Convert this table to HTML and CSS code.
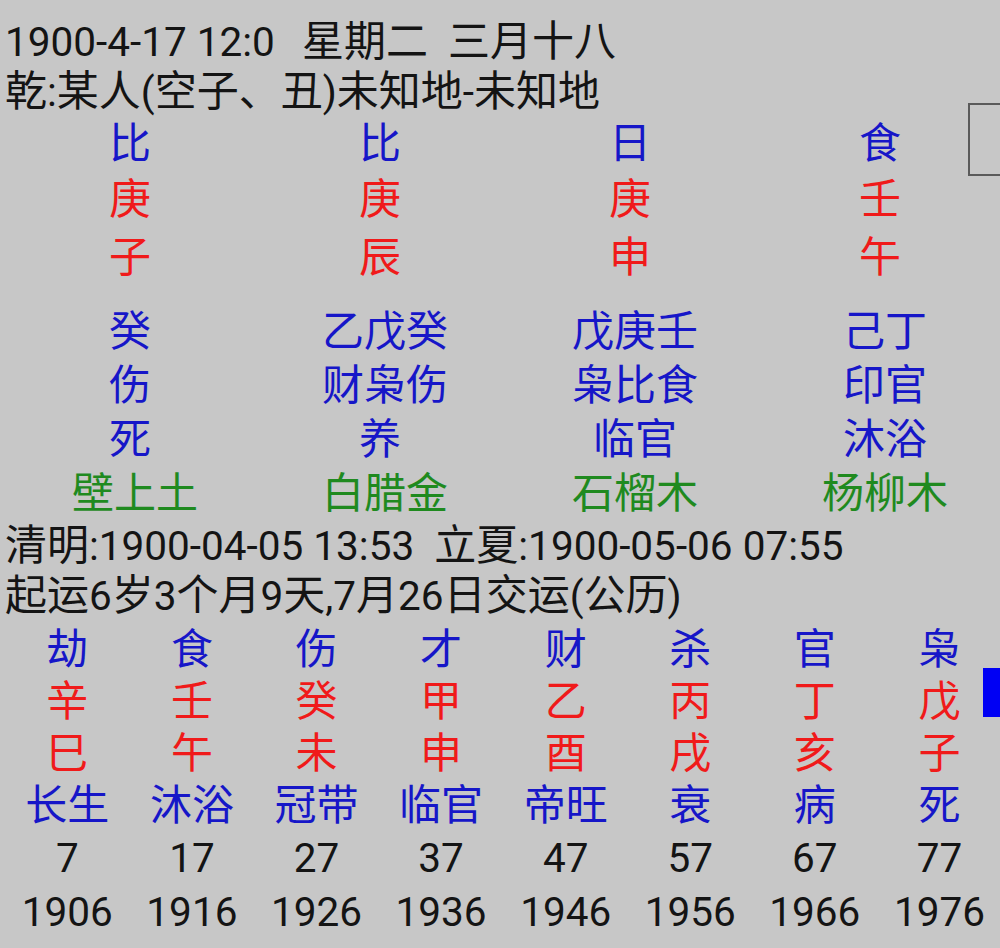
FILE: index.html
```html
<!DOCTYPE html>
<html lang="zh-CN">
<head>
<meta charset="utf-8">
<title>八字排盘</title>
<link rel="stylesheet" href="styles.css">
</head>
<body>
<div class="page">
  <div class="line"><span class="n gap">1900-4-17 12:0&nbsp; </span>星期二<span class="n">&nbsp; </span>三月十八</div>
  <div class="line">乾<span class="n">:</span>某人<span class="n">(</span>空子、丑<span class="n">)</span>未知地<span class="n">-</span>未知地</div>

  <div class="pillars">
    <div class="prow stem-god blue"><span>比</span><span>比</span><span>日</span><span>食</span></div>
    <div class="prow gz red"><span>庚</span><span>庚</span><span>庚</span><span>壬</span></div>
    <div class="prow gz red"><span>子</span><span>辰</span><span>申</span><span>午</span></div>
  </div>

  <div class="hidden">
    <div class="hrow blue"><span>癸</span><span class="w">乙戊癸</span><span class="w">戊庚壬</span><span class="w">己丁</span></div>
    <div class="hrow blue"><span>伤</span><span class="w">财枭伤</span><span class="w">枭比食</span><span class="w">印官</span></div>
    <div class="hrow blue"><span>死</span><span>养</span><span class="w">临官</span><span class="w">沐浴</span></div>
    <div class="hrow green"><span class="w">壁上土</span><span class="w">白腊金</span><span class="w">石榴木</span><span class="w">杨柳木</span></div>
  </div>

  <div class="line">清明<span class="n">:1900-04-05 13:53&nbsp; </span>立夏<span class="n">:1900-05-06 07:55</span></div>
  <div class="line">起运<span class="n">6</span>岁<span class="n">3</span>个月<span class="n">9</span>天<span class="n">,7</span>月<span class="n">26</span>日交运<span class="n">(</span>公历<span class="n">)</span></div>

  <div class="dayun">
    <div class="drow blue"><span>劫</span><span>食</span><span>伤</span><span>才</span><span>财</span><span>杀</span><span>官</span><span>枭</span></div>
    <div class="drow red"><span>辛</span><span>壬</span><span>癸</span><span>甲</span><span>乙</span><span>丙</span><span>丁</span><span>戊</span></div>
    <div class="drow red"><span>巳</span><span>午</span><span>未</span><span>申</span><span>酉</span><span>戌</span><span>亥</span><span>子</span></div>
    <div class="drow blue"><span>长生</span><span>沐浴</span><span>冠带</span><span>临官</span><span>帝旺</span><span>衰</span><span>病</span><span>死</span></div>
    <div class="drow num"><span>7</span><span>17</span><span>27</span><span>37</span><span>47</span><span>57</span><span>67</span><span>77</span></div>
    <div class="drow num year"><span>1906</span><span>1916</span><span>1926</span><span>1936</span><span>1946</span><span>1956</span><span>1966</span><span>1976</span></div>
  </div>
</div>
<div class="scroll-thumb"></div>
<div class="scroll-mark"></div>
</body>
</html>
```

FILE: styles.css
```css
html, body {
  margin: 0;
  padding: 0;
  background: #c7c7c7;
}

body {
  width: 1000px;
  height: 948px;
  overflow: hidden;
  position: relative;
  font-family: Roboto, "Noto Sans CJK SC", sans-serif;
  font-size: 42px;
  color: #141414;
}

.page {
  padding: 17px 0 0 5px;
}

.n {
  font-size: 40.5px;
}

.gap {
  padding-right: 7px;
}

.line {
  height: 50px;
  line-height: 50px;
  white-space: nowrap;
}

.blue { color: #1616c8; }
.red { color: #f01a1a; }
.green { color: #1f8a1f; }

.prow,
.hrow {
  display: grid;
  grid-template-columns: repeat(4, 250px);
  text-align: center;
  white-space: nowrap;
}

.hrow .w {
  padding-left: 10px;
}

.stem-god {
  height: 54px;
  line-height: 54px;
}

.gz {
  height: 58px;
  line-height: 58px;
}

.hidden {
  margin-top: 18px;
}

.hrow {
  height: 54px;
  line-height: 54px;
}

.dayun {
  margin-top: 3px;
}

.drow {
  display: grid;
  grid-template-columns: repeat(8, 124.6px);
  text-align: center;
  height: 52px;
  line-height: 52px;
  white-space: nowrap;
}

.num {
  color: #141414;
  font-size: 40.5px;
}

.year {
  line-height: 56px;
}

.scroll-thumb {
  position: absolute;
  left: 968px;
  top: 103px;
  width: 40px;
  height: 73px;
  border: 2px solid #5a5a5a;
  box-sizing: border-box;
}

.scroll-mark {
  position: absolute;
  left: 983px;
  top: 668px;
  width: 17px;
  height: 49px;
  background: #0000f4;
}
```
